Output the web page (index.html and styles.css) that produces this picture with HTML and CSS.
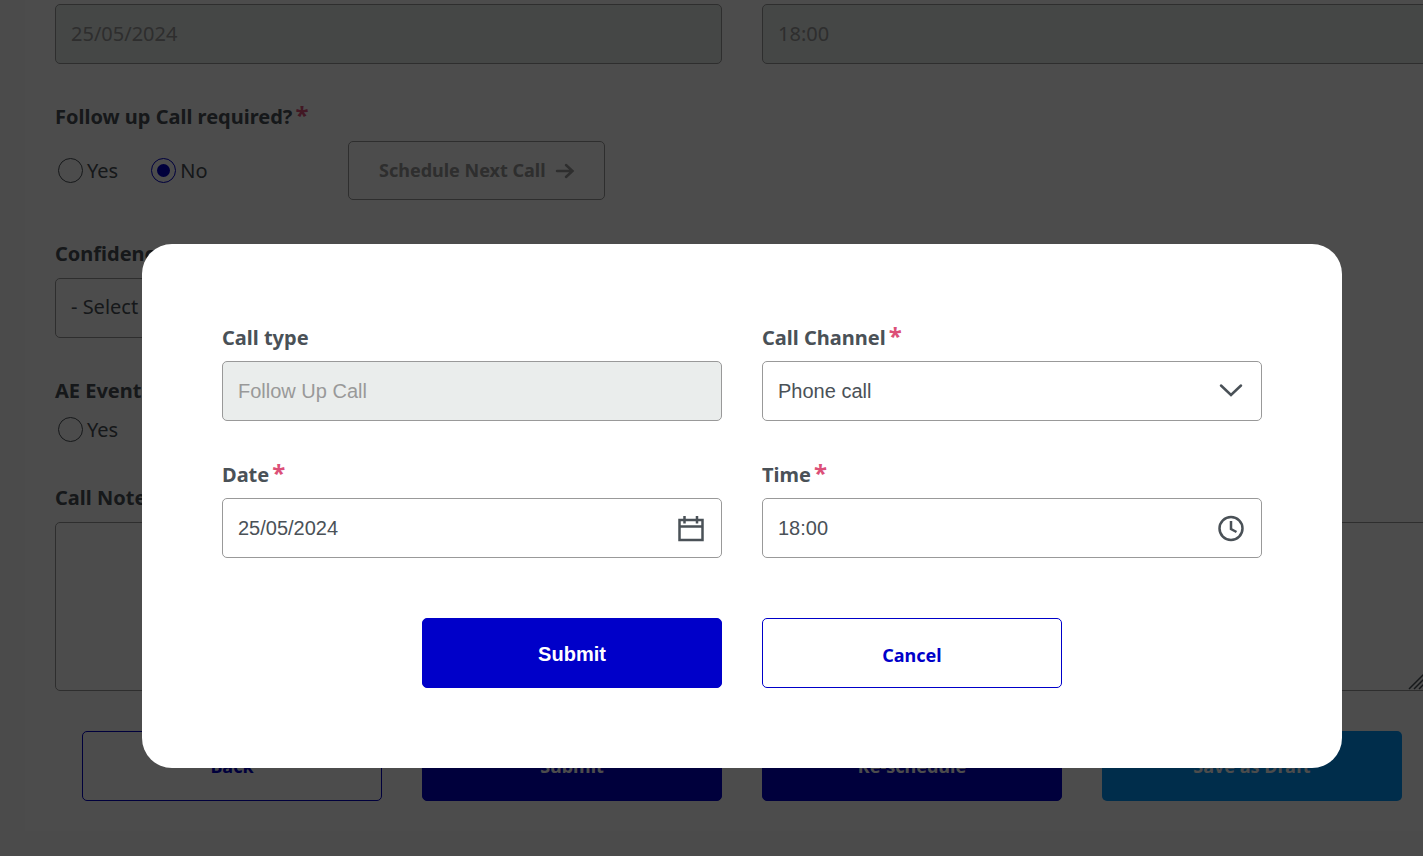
FILE: index.html
```html
<!DOCTYPE html>
<html lang="en">
<head>
<meta charset="utf-8">
<title>Call details</title>
<link rel="stylesheet" href="styles.css">
</head>
<body>
<div class="shell">
  <main class="card">
    <div class="columns">
      <input class="control" type="text" value="25/05/2024" aria-label="Call date" disabled>
      <input class="control" type="text" value="18:00" aria-label="Call time" disabled>
    </div>

    <fieldset class="group">
      <legend class="label">Follow up Call required?<span class="required">*</span></legend>
      <div class="row">
        <div class="choices">
          <label class="choice"><input class="radio" type="radio" name="followup">Yes</label>
          <label class="choice"><input class="radio" type="radio" name="followup" checked>No</label>
        </div>
        <button class="next" type="button" disabled>Schedule Next Call
          <svg class="arrow" viewBox="0 0 20 18" aria-hidden="true"><path d="M2 9H17M11 3L17.500 9L11 15"/></svg>
        </button>
      </div>
    </fieldset>

    <div class="columns">
      <div class="field">
        <label class="label" for="confidence">Confidence</label>
        <select class="control" id="confidence"><option>- Select -</option></select>
      </div>
    </div>

    <fieldset class="group">
      <legend class="label">AE Event</legend>
      <div class="choices choices-compact">
        <label class="choice"><input class="radio" type="radio" name="ae">Yes</label>
        <label class="choice"><input class="radio" type="radio" name="ae">No</label>
      </div>
    </fieldset>

    <div class="field">
      <label class="label" for="notes">Call Notes</label>
      <div class="notes">
        <textarea class="control area" id="notes"></textarea>
        <svg class="grip" viewBox="0 0 20 20" aria-hidden="true"><path d="M1 19L19 1M6 19L19 6M11 19L19 11"/></svg>
      </div>
    </div>

    <div class="actions">
      <button class="button outline" type="button">Back</button>
      <button class="button primary" type="button">Submit</button>
      <button class="button primary" type="button">Re-schedule</button>
      <button class="button draft" type="button">Save as Draft</button>
    </div>
  </main>

  <div class="overlay">
    <form class="modal" role="dialog" aria-modal="true" aria-label="Schedule next call">
      <div class="columns">
        <div class="field">
          <label class="label" for="type">Call type</label>
          <input class="control" id="type" type="text" value="Follow Up Call" disabled>
        </div>
        <div class="field">
          <label class="label" for="channel">Call Channel<span class="required">*</span></label>
          <div class="with-icon">
            <select class="control" id="channel"><option>Phone call</option></select>
            <svg class="icon chevron" viewBox="0 0 28 28" aria-hidden="true"><path d="M4 8.500L14 18L24 8.500"/></svg>
          </div>
        </div>
        <div class="field">
          <label class="label" for="date">Date<span class="required">*</span></label>
          <div class="with-icon">
            <input class="control" id="date" type="text" value="25/05/2024">
            <svg class="icon" viewBox="0 0 28 28" aria-hidden="true"><path d="M2.500 6H25.500V26H2.500ZM2.500 12.500H25.500M7.500 2V9.500M20 2V9.500"/></svg>
          </div>
        </div>
        <div class="field">
          <label class="label" for="time">Time<span class="required">*</span></label>
          <div class="with-icon">
            <input class="control" id="time" type="text" value="18:00">
            <svg class="icon" viewBox="0 0 28 28" aria-hidden="true"><circle cx="14" cy="14.500" r="11.500"/><path d="M14 7V15L19.500 18"/></svg>
          </div>
        </div>
      </div>
      <div class="actions">
        <button class="button primary submit" type="submit">Submit</button>
        <button class="button outline" type="button">Cancel</button>
      </div>
    </form>
  </div>
</div>
</body>
</html>
```
FILE: styles.css
```css
* {
  box-sizing: border-box;
}

body {
  margin: 0;
  overflow: hidden;
  background: #fafafa;
  color: #4a5157;
  font: 20px/27px "Noto Sans", sans-serif;
}

/* The form runs past the right edge of the window. */
.shell {
  margin-right: -61px;
  padding: 0 25px 25px;
}

.card {
  display: flex;
  flex-direction: column;
  gap: 40px;
  padding: 4px 30px 30px;
  background: #fff;
}

.columns {
  display: grid;
  grid-template-columns: 1fr 1fr;
  gap: 40px;
}

.field {
  display: flex;
  flex-direction: column;
  gap: 10px;
}

.group {
  min-width: 0;
  margin: 0;
  padding: 0;
  border: 0;
}

.label {
  padding: 0;
  font-weight: 700;
}

.card .label {
  line-height: 25px;
  padding-bottom: 2px;
}

.group .label {
  margin-bottom: 10px;
}

.required {
  margin-left: 3px;
  color: #dc5078;
  font-size: 24px;
  line-height: 0;
}

.control {
  display: block;
  width: 100%;
  height: 60px;
  margin: 0;
  padding: 0 15px 2px;
  border: 1px solid #999;
  border-radius: 5px;
  background: #fff;
  color: inherit;
  font: inherit;
  appearance: none;
}

.card select.control {
  padding-bottom: 4px;
}

.control:disabled {
  background: #eaedec;
  color: #999;
}

.card .control:disabled {
  background: #e8eeeb;
}

.row {
  display: flex;
  height: 60px;
}

.choices {
  display: flex;
  align-items: center;
  gap: 30px;
  width: 293px;
  height: 59px;
}

.choices-compact {
  height: 30px;
  padding-bottom: 1px;
}

.choice {
  display: flex;
  align-items: center;
  gap: 4px;
  line-height: 25px;
}

.radio {
  width: 25px;
  height: 25px;
  margin: 0 0 0 3px;
  border: 1px solid #4a5157;
  border-radius: 50%;
  background: #fff;
  appearance: none;
}

.radio:checked {
  padding: 5px;
  border-color: #0000c9;
  background: #0000c9 content-box;
}

.next {
  display: flex;
  align-items: center;
  gap: 9px;
  height: 59px;
  padding: 0 29px 0 30px;
  border: 1px solid #999;
  border-radius: 5px;
  background: #fff;
  color: #999;
  font: 700 18px/27px "Noto Sans", sans-serif;
}

.arrow {
  width: 20px;
  height: 18px;
  fill: none;
  stroke: currentColor;
  stroke-width: 2.5;
  stroke-linecap: round;
}

.notes,
.with-icon {
  position: relative;
}

.area {
  height: 169px;
  padding: 15px;
  resize: none;
}

.grip {
  position: absolute;
  right: 1px;
  bottom: 1px;
  width: 20px;
  height: 20px;
  fill: none;
  stroke: #4a5157;
  stroke-width: 1.5;
}

.icon {
  position: absolute;
  top: 16px;
  right: 17px;
  width: 28px;
  height: 28px;
  fill: none;
  stroke: #4a5157;
  stroke-width: 2.5;
  pointer-events: none;
}

.chevron {
  stroke-linecap: round;
}

.actions {
  display: flex;
  justify-content: center;
  gap: 40px;
}

.button {
  width: 300px;
  height: 70px;
  padding: 5px 0 0;
  border: 1px solid transparent;
  border-radius: 5px;
  font: 700 18px/27px "Noto Sans", sans-serif;
}

.card .button {
  padding-top: 1px;
}

.outline {
  border-color: #0000c9;
  background: #fff;
  color: #0000c9;
}

.primary {
  background: #0000c9;
  border-color: #0000c9;
  color: #fff;
}

.draft {
  background: #0096fa;
  color: #fff;
}

.overlay {
  position: fixed;
  inset: 0 -61px 0 0;
  display: flex;
  align-items: flex-start;
  justify-content: center;
  padding-top: 244px;
  background: rgba(0, 0, 0, 0.7);
}

.modal {
  display: flex;
  flex-direction: column;
  gap: 60px;
  width: 100%;
  max-width: 1200px;
  padding: 80px;
  border-radius: 30px;
  background: #fff;
}

.modal .control {
  padding-bottom: 0;
  font-family: "Liberation Sans", Arial, sans-serif;
}

.submit {
  padding: 2px 0 0;
  font: 700 20px/27px "Liberation Sans", Arial, sans-serif;
}
```
